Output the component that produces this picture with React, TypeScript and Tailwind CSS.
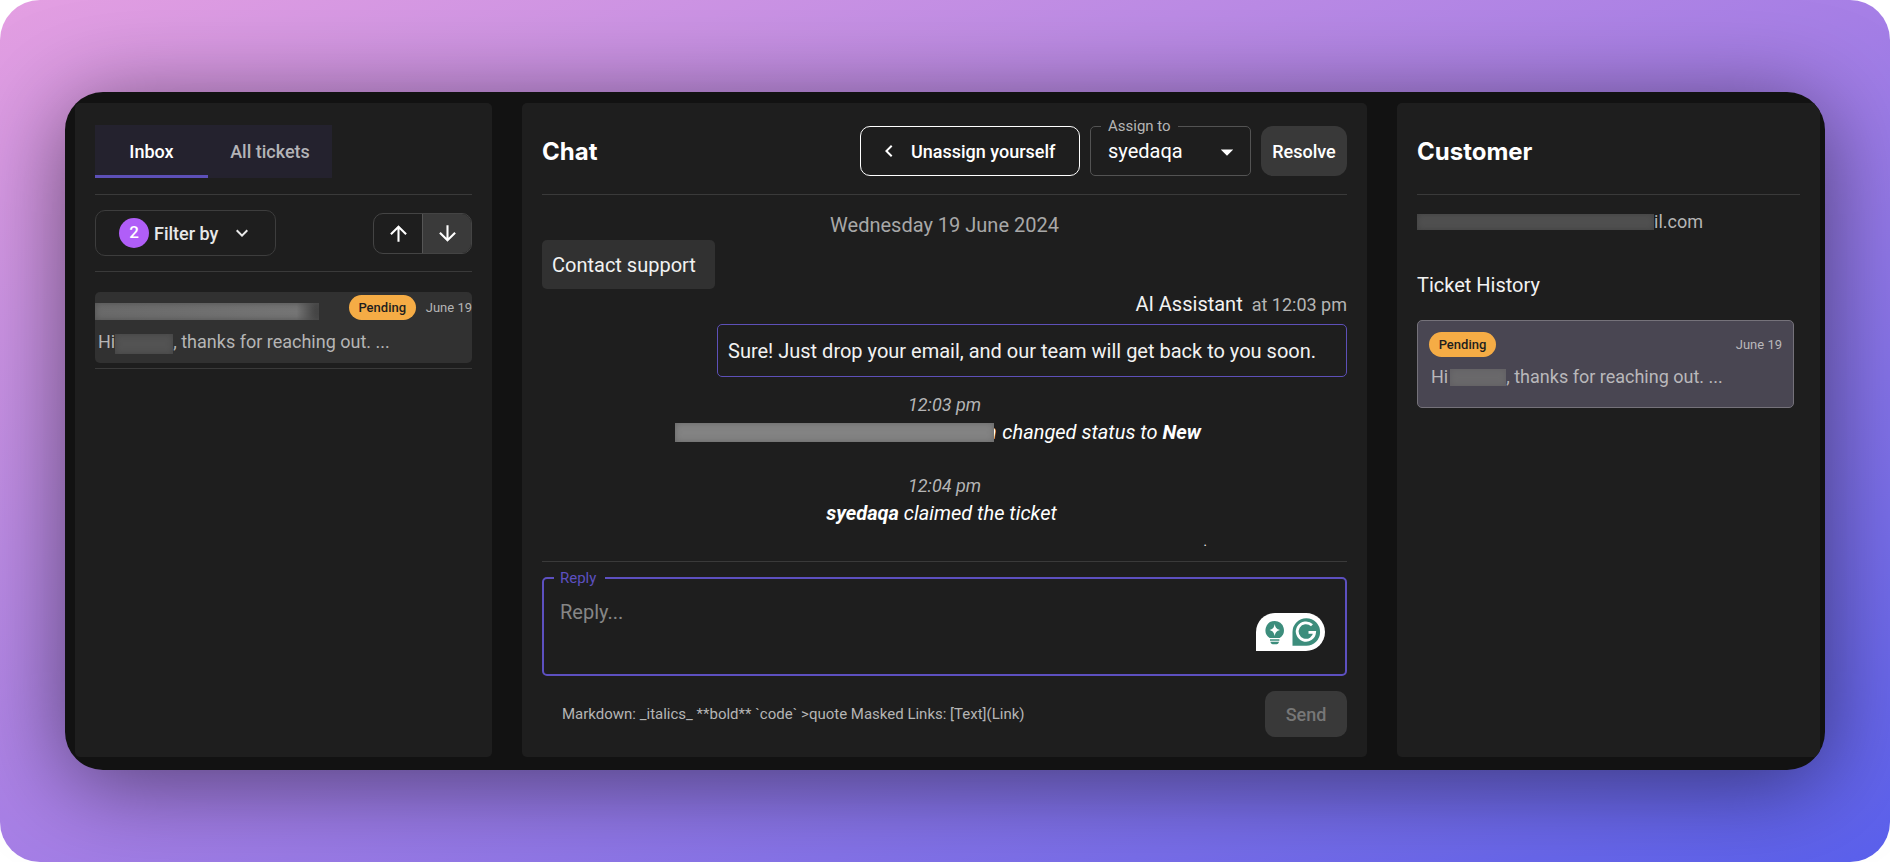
import { useState } from "react";
import { MdArrowDownward, MdArrowDropDown, MdArrowUpward, MdKeyboardArrowDown, MdKeyboardArrowLeft } from "react-icons/md";

const StatusBadge = ({ label }: { label: string }) => (
    <span className="flex h-[25px] w-[67px] items-center justify-center rounded-full bg-[#f5ac45] text-[13px] font-medium text-[#1e1e1e]">
        {label}
    </span>
);

// greyed out strip used in place of private data
const Redacted = ({ className }: { className: string }) => (
    <span aria-hidden="true" className={`inline-block shrink-0 ${className}`} />
);

const GrammarWidget = () => (
    <svg width="69" height="38" viewBox="0 0 69 38" fill="none" aria-hidden="true">
        <path d="M0 38V19A19 19 0 0 1 19 0H50A19 19 0 0 1 50 38Z" fill="#fff" />
        <path d="M18.7 8a9.200 9.200 0 0 0-5 16.900h10a9.200 9.200 0 0 0-5-16.900Z" fill="#3c8d7c" />
        <path d="M18.700 11c.8 3.800 1.700 4.900 5.200 6-3.500 1.100-4.400 2.200-5.200 6-.8-3.800-1.700-4.900-5.200-6 3.500-1.100 4.400-2.200 5.200-6Z" fill="#fff" />
        <path d="M14 26.200h9.400v1.500H14zM14.400 28.800h8.600c-.3 1.600-1.100 2.400-2.400 2.400h-3.800c-1.300 0-2.100-.8-2.400-2.400Z" fill="#3c8d7c" />
        <path d="M36.500 32.800V18.900a13.800 13.800 0 1 1 13.800 13.900Z" fill="#3c8d7c" />
        <path d="M56 12.300A8.700 8.700 0 1 0 58.600 19.300H52.500" stroke="#fff" strokeWidth="2.800" />
    </svg>
);

const Inbox = () => {

    const [tab, setTab] = useState("inbox");

    return (
        <section className="rounded-[5px] bg-[#1e1e1e] px-5">
            <div className="flex h-[92px] items-center border-b border-[#3a3a3a] pt-[5px]">
                <div role="tablist" className="flex h-[53px] bg-[#24222e] text-[18px] font-medium">
                    <button
                        role="tab"
                        aria-selected={tab === "inbox"}
                        onClick={() => setTab("inbox")}
                        className="w-[113px] border-b-[3px] border-[#5d50b8] pt-[3px] text-white"
                    >
                        Inbox
                    </button>
                    <button
                        role="tab"
                        aria-selected={tab === "all"}
                        onClick={() => setTab("all")}
                        className="w-[124px] border-b-[3px] border-transparent pt-[3px] text-[#b4b4b8]"
                    >
                        All tickets
                    </button>
                </div>
            </div>
            <div className="flex h-[77px] items-center justify-between border-b border-[#3a3a3a]">
                <button className="flex h-[46px] w-[181px] items-center rounded-[10px] border border-[#3d3d3d] pl-[23px] text-[18px] font-medium text-[#e8e8e8]">
                    <span className="mr-[5px] flex size-[30px] items-center justify-center rounded-full bg-[#b05ef8] text-[17px] text-white">2</span>
                    Filter by
                    <MdKeyboardArrowDown className="ml-3" size={24} />
                </button>
                <div className="flex h-[41px] w-[99px] overflow-hidden rounded-[10px] border border-[#444444] text-white">
                    <button aria-label="Sort ascending" className="flex flex-1 items-center justify-center">
                        <MdArrowUpward size={25} />
                    </button>
                    <button aria-label="Sort descending" className="flex flex-1 items-center justify-center border-l border-[#555555] bg-[#3a3a3a]">
                        <MdArrowDownward size={25} />
                    </button>
                </div>
            </div>
            <div className="border-b border-[#3a3a3a] pt-5 pb-[5px]">
                <article className="h-[71px] rounded-[5px] bg-[#313131] pt-[3px]">
                    <div className="flex h-[25px] items-center">
                        <Redacted className="h-[17px] w-[224px] self-end bg-linear-to-r from-[#6a6a6a] via-[#757575] via-90% to-[#3c3c3c] inset-shadow-[0_0_6px_#505050]" />
                        <div className="ml-auto flex items-center gap-[10px]">
                            <StatusBadge label="Pending" />
                            <time className="text-[13px] text-[#b5b5b5]">June 19</time>
                        </div>
                    </div>
                    <p className="mt-2 flex items-center pl-[3px] text-[18px] leading-7 text-[#b5b5b5]">
                        Hi
                        <Redacted className="mt-1 h-5 w-[58px] bg-[#535353] inset-shadow-[0_0_6px_#434343]" />
                        , thanks for reaching out. ...
                    </p>
                </article>
            </div>
        </section>
    );
};

const Chat = () => {

    const [reply, setReply] = useState("");

    return (
        <section className="flex flex-col rounded-[5px] bg-[#1e1e1e] px-5">
            <div className="flex h-[92px] shrink-0 items-center gap-[10px] border-b border-[#3a3a3a] pt-[5px]">
                <h2 className="mt-[2px] mr-auto font-[Inter] text-[24px] font-bold text-white">Chat</h2>
                <button className="flex h-[50px] w-[220px] items-center rounded-[10px] border border-white pl-4 text-[18px] font-medium text-white">
                    <MdKeyboardArrowLeft className="mr-[10px]" size={24} />
                    Unassign yourself
                </button>
                <fieldset className="relative -mt-2 h-[58px] w-[161px] rounded-[5px] border border-[#535353]">
                    <legend className="ml-[10px] px-[7px] text-[15px] leading-4 text-[#b5b5b5]">
                        <label htmlFor="assignee">Assign to</label>
                    </legend>
                    <select id="assignee" className="-mt-2 h-[50px] w-full appearance-none bg-transparent pl-[17px] text-[20px] text-white outline-none">
                        <option>syedaqa</option>
                    </select>
                    <MdArrowDropDown className="pointer-events-none absolute right-2 bottom-2 text-white" size={30} />
                </fieldset>
                <button className="h-[50px] w-[86px] rounded-xl bg-[#393939] text-[18px] font-medium text-white">Resolve</button>
            </div>

            <div className="min-h-0 flex-1 overflow-hidden pt-[15px] text-[20px] leading-[30px] text-[#f2f2f2]">
                <p className="text-center text-[#a8a8a8]">Wednesday 19 June 2024</p>
                <p className="flex h-[49px] w-[173px] items-center rounded-[5px] bg-[#313131] pl-[10px]">Contact support</p>
                <p className="text-right">
                    AI Assistant <span className="ml-1 text-[18px] text-[#b5b5b5]">at 12:03 pm</span>
                </p>
                <p className="mt-1 ml-auto flex h-[53px] w-[630px] items-center rounded-[5px] border border-[#5d50b8] pl-[10px]">
                    Sure! Just drop your email, and our team will get back to you soon.
                </p>
                <div className="mt-4 text-center italic">
                    <p className="text-[18px] leading-6 text-[#b5b5b5]">12:03 pm</p>
                    <p className="mx-auto flex w-[540px] items-center text-white">
                        <Redacted className="z-10 h-[19px] w-[319px] bg-[#838383] inset-shadow-[0_0_6px_#666666]" />
                        <b className="-ml-[14px]">m</b>
                        <span className="ml-[6px]">changed status to <b>New</b></span>
                    </p>
                </div>
                <div className="mt-[27px] text-center italic">
                    <p className="text-[18px] leading-6 text-[#b5b5b5]">12:04 pm</p>
                    <p className="pr-[6px] text-white"><b>syedaqa</b> claimed the ticket</p>
                </div>
                <p className="mt-[6px] pr-[140px] text-right text-[13px] leading-4">.</p>
            </div>

            <form className="border-t border-[#3a3a3a] pt-2 pb-5" onSubmit={(event) => event.preventDefault()}>
                <fieldset className="relative h-[106px] rounded-[5px] border-2 border-[#5d50c0]">
                    <legend className="ml-[10px] pr-[9px] pl-[6px] text-[15px] leading-4 text-[#5d50c0]">
                        <label htmlFor="reply">Reply</label>
                    </legend>
                    <textarea
                        id="reply"
                        value={reply}
                        onChange={(event) => setReply(event.target.value)}
                        placeholder="Reply..."
                        className="block h-[86px] w-full resize-none bg-transparent px-4 pt-3 text-[20px] leading-7 text-white outline-none placeholder:text-[#868686]"
                    />
                    <div className="absolute right-5 bottom-[23px]">
                        <GrammarWidget />
                    </div>
                </fieldset>
                <div className="mt-[15px] flex items-center justify-between pl-5">
                    <p className="text-[15px] text-[#b5b5b5]">Markdown: _italics_ **bold** `code` &gt;quote Masked Links: [Text](Link)</p>
                    <button disabled className="h-[46px] w-[82px] rounded-[10px] bg-[#393939] text-[18px] font-medium text-[#777777]">Send</button>
                </div>
            </form>
        </section>
    );
};

const Customer = () => (
    <section className="rounded-[5px] bg-[#1e1e1e] px-5">
        <div className="flex h-[92px] items-center border-b border-[#3a3a3a] pt-[5px]">
            <h2 className="mt-[2px] font-[Inter] text-[24px] font-bold text-white">Customer</h2>
        </div>
        <p className="mt-[15px] flex items-center text-[18px] leading-6 text-[#b5b5b5]">
            <Redacted className="h-4 w-[237px] bg-[#505050] inset-shadow-[0_0_6px_#404040]" />
            il.com
        </p>
        <h3 className="mt-[37px] text-[20px] leading-7 text-[#f2f2f2]">Ticket History</h3>
        <article className="mt-[21px] mr-[6px] h-[88px] rounded-[5px] border border-[#75727a] bg-[#494652] px-[11px] pt-[11px]">
            <div className="flex items-center justify-between">
                <StatusBadge label="Pending" />
                <time className="text-[13px] text-[#b9b8bb]">June 19</time>
            </div>
            <p className="mt-[6px] flex items-center pl-[2px] text-[18px] leading-7 text-[#b9b8bb]">
                Hi
                <Redacted className="ml-[2px] h-[17px] w-[56px] bg-[#6a696b] inset-shadow-[0_0_6px_#5f5d62]" />
                , thanks for reaching out. ...
            </p>
        </article>
    </section>
);

const App = () => {
    return (
        <div className="bg-white">
            <main className="flex min-h-screen rounded-[40px] bg-linear-to-br from-[#e49fe2] via-[#a67fe6] to-[#5a60ec] px-[65px] py-[92px] font-[Roboto,sans-serif]">
                <div className="grid flex-1 grid-cols-[417fr_845fr_423fr] gap-[30px] overflow-hidden rounded-[38px] bg-[#121212] pt-[11px] pr-[5px] pb-[13px] pl-[10px] shadow-[0_12px_90px_rgba(0,0,0,0.5)]">
                    <Inbox />
                    <Chat />
                    <Customer />
                </div>
            </main>
        </div>
    );
};

export default App;
